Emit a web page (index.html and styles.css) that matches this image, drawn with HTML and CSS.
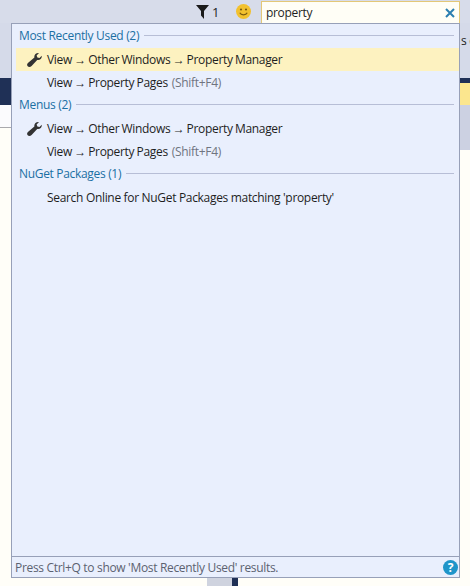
FILE: index.html
```html
<!DOCTYPE html>
<html>
<head>
	<meta name="viewport" content="width=device-width, initial-scale=1">
	<link rel="stylesheet" href="styles.css">
</head>
<body>
	<div class="toolbar">
		<svg class="funnel" width="13" height="14" viewBox="0 0 13 14"><path d="M0 0H13L8 6V14L5 10.5V6Z" fill="#1a1a1a"/></svg>
		<span class="count">1</span>
		<span class="smiley">
			<svg width="15" height="15" viewBox="0 0 15 15"><circle cx="7.5" cy="7.5" r="7.5" fill="#f2c12e"/><circle cx="5" cy="5.5" r="1.1" fill="#7a5a10"/><circle cx="10" cy="5.5" r="1.1" fill="#7a5a10"/><path d="M3.8 8.8C5 11.6 10 11.6 11.2 8.8" fill="none" stroke="#7a5a10" stroke-width="1.2"/></svg>
		</span>
		<div class="searchbox">
			<span>property</span>
			<svg width="10" height="10" viewBox="0 0 10 10"><path d="M1 1L9 9M9 1L1 9" stroke="#2b7eb0" stroke-width="2"/></svg>
		</div>
	</div>

	<div class="side side-left">
		<div class="band-gray"></div>
		<div class="band-navy"></div>
		<div class="band-white"></div>
		<div class="band-cream"></div>
	</div>

	<div class="panel">
		<div class="results">
			<div class="group"><span>Most Recently Used (2)</span><i></i></div>
			<div class="row active">
				<span class="slot"><svg width="15" height="14" viewBox="0 0 15 14"><path d="M14.7 2.8C15.1 5.4 12.8 7.6 10.2 6.9L4.6 12.9C3.4 14.2 1.6 14.2 .7 13.3S-.2 10.8 1.2 9.7L7.4 4.6C6.8 1.9 9.2-.4 12 .1L9.6 2.5 10.4 4.6 12.5 5Z" fill="#333"/></svg></span>
				<span class="nav">View → Other Windows → Property Manager</span>
			</div>
			<div class="row"><span class="slot"></span><span class="nav">View → Property Pages</span><em>(Shift+F4)</em></div>

			<div class="group"><span>Menus (2)</span><i></i></div>
			<div class="row">
				<span class="slot"><svg width="15" height="14" viewBox="0 0 15 14"><path d="M14.7 2.8C15.1 5.4 12.8 7.6 10.2 6.9L4.6 12.9C3.4 14.2 1.6 14.2 .7 13.3S-.2 10.8 1.2 9.7L7.4 4.6C6.8 1.9 9.2-.4 12 .1L9.6 2.5 10.4 4.6 12.5 5Z" fill="#333"/></svg></span>
				<span class="nav">View → Other Windows → Property Manager</span>
			</div>
			<div class="row"><span class="slot"></span><span class="nav">View → Property Pages</span><em>(Shift+F4)</em></div>

			<div class="group"><span>NuGet Packages (1)</span><i></i></div>
			<div class="row"><span class="slot"></span><span>Search Online for NuGet Packages matching 'property'</span></div>
		</div>
		<div class="status">
			<span>Press Ctrl+Q to show 'Most Recently Used' results.</span>
			<b class="help">?</b>
		</div>
	</div>

	<div class="side side-right">
		<div class="band-gray short"><span class="peek">s c</span></div>
		<div class="band-navy thin"></div>
		<div class="band-yellow"></div>
		<div class="band-gray2"></div>
		<div class="band-cream"></div>
	</div>

	<div class="tail">
		<div class="tail-gray"></div>
		<div class="tail-navy"></div>
	</div>
</body>
</html>
```

FILE: styles.css
```css
html, body {
	margin: 0;
	padding: 0;
}

body {
	width: 470px;
	height: 586px;
	overflow: hidden;
	display: grid;
	grid-template-columns: 11px 449px 10px;
	grid-template-rows: 23px 555px 8px;
	background: #fffef8;
	font-family: "Open Sans", "Noto Sans", sans-serif;
	font-size: 12px;
	letter-spacing: -0.32px;
	color: #1e1e1e;
}

/* top strip */
.toolbar {
	grid-column: 1 / 4;
	display: flex;
	align-items: center;
	background: #d7dcea;
	padding-right: 10px;
}

.funnel {
	margin-left: 196px;
}

.count {
	margin-left: 3px;
	font-size: 13px;
	width: 8px;
}

.smiley {
	display: flex;
	margin-left: 16px;
}

.searchbox {
	margin-left: 10px;
	flex: 1;
	height: 22px;
	box-sizing: border-box;
	border: 1px solid #e3c777;
	border-bottom: none;
	background: #fffef6;
	padding: 0 4px;
	display: flex;
	align-items: center;
	justify-content: space-between;
	align-self: flex-start;
	margin-top: 1px;
	font-size: 12px;
}

/* what shows beside the panel */
.side {
	display: flex;
	flex-direction: column;
}

.band-gray {
	height: 55px;
	background: #d5dae9;
}

.band-navy {
	height: 27px;
	background: #1f3056;
}

.band-navy.thin {
	height: 5px;
}

.band-white {
	height: 22px;
	background: #fbfbfd;
	border-bottom: 1px solid #a9a9ad;
}

.band-cream {
	flex: 1;
	background: #fffef8;
}

.band-yellow {
	height: 22px;
	background: #fbe68e;
}

.band-gray2 {
	height: 45px;
	background: #ccd1e2;
}

.peek {
	display: block;
	padding-top: 9px;
	padding-left: 1px;
	white-space: nowrap;
	overflow: hidden;
	color: #222;
}

/* the popup */
.panel {
	display: flex;
	flex-direction: column;
	box-sizing: border-box;
	border: 1px solid #97a0b8;
	background: #e9effd;
}

.results {
	flex: 1;
	padding: 1px 0 0 4px;
}

.group {
	height: 23px;
	line-height: 21px;
	display: flex;
	color: #1b6fa3;
	padding-left: 3px;
	padding-right: 5px;
}

.group i {
	flex: 1;
	height: 1px;
	margin: 10px 0 0 5px;
	background: #b7bed6;
}

.row {
	height: 23px;
	display: flex;
	align-items: center;
	white-space: nowrap;
}

.row.active {
	background: #fdf2c0;
}

.row em {
	font-style: normal;
	color: #6f7480;
	margin-left: 4px;
}

.nav {
	word-spacing: -0.5px;
}

.slot {
	width: 31px;
	display: flex;
	justify-content: flex-end;
	padding-right: 5px;
	box-sizing: border-box;
}

.status {
	height: 20px;
	border-top: 1px solid #97a0b8;
	display: flex;
	align-items: center;
	justify-content: space-between;
	padding: 0 1px 0 3px;
	color: #5c6270;
}

.help {
	width: 15px;
	height: 15px;
	border-radius: 50%;
	background: #1f95c9;
	color: #fff;
	font-size: 12px;
	line-height: 15px;
	text-align: center;
	letter-spacing: 0;
}

/* below the popup */
.tail {
	grid-column: 1 / 4;
	display: flex;
	padding-left: 207px;
}

.tail-gray {
	width: 25px;
	background: #cfd3df;
}

.tail-navy {
	width: 6px;
	background: #1f3056;
}
```
